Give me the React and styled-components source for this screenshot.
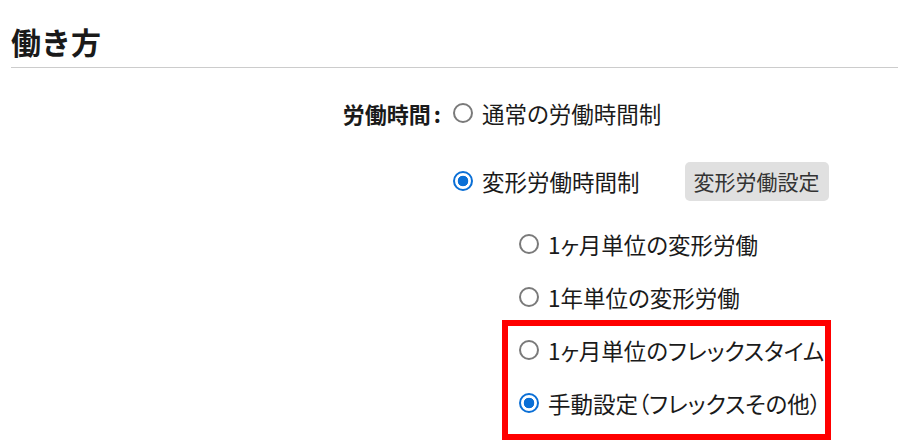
import React from 'react';
import styled, { createGlobalStyle } from 'styled-components';

const GlobalStyle = createGlobalStyle`
  html, body {
    margin: 0;
    padding: 0;
    background: #ffffff;
  }

  body {
    font-family: 'Noto Sans CJK JP', 'Noto Sans', sans-serif;
    color: #1a1a1a;
  }
`;

const StyledPage = styled.div`
  padding: 23px 0 0 11px;
`;

const StyledTitle = styled.h1`
  margin: 0;
  padding-bottom: 8px;
  border-bottom: 1px solid #cccccc;
  font-size: 30px;
  font-weight: 700;
  line-height: 36px;
  color: #1a1a1a;
`;

const StyledField = styled.div`
  display: flex;
  align-items: flex-start;
  gap: 12px;
  margin-top: 25px;
`;

const StyledLabel = styled.div`
  width: 430px;
  height: 40px;
  display: flex;
  align-items: center;
  justify-content: flex-end;
  font-size: 22px;
  font-weight: 700;
  font-feature-settings: 'palt';

  span {
    margin-left: 3px;
  }
`;

const StyledOptions = styled.div`
  display: flex;
  flex-direction: column;
  gap: 28px;
`;

const StyledOption = styled.label`
  display: flex;
  align-items: center;
  gap: 9px;
  height: ${(p) => (p.$sub ? '30px' : '40px')};
  font-size: 22.5px;
  font-feature-settings: 'palt';
  white-space: nowrap;
  cursor: pointer;
`;

const StyledRadio = styled.input.attrs({ type: 'radio' })`
  appearance: none;
  flex: none;
  box-sizing: border-box;
  width: 20px;
  height: 20px;
  margin: 0;
  border-radius: 50%;
  border: 2px solid #7a7a7a;
  background: #ffffff;

  &:checked {
    border: 2px solid #0a6fd6;
    background: radial-gradient(circle, #0a6fd6 0 5px, #ffffff 5.6px);
  }
`;

const StyledButton = styled.button`
  height: 39px;
  margin-left: 36px;
  padding: 0 9px;
  border: none;
  border-radius: 5px;
  background-color: #e0e0e0;
  font-family: inherit;
  font-size: 21px;
  font-feature-settings: 'palt';
  color: #333333;
`;

const StyledSubList = styled.div`
  display: flex;
  flex-direction: column;
  gap: 23px;
  margin: 28px 0 0 66px;
`;

const StyledHighlight = styled.div`
  display: flex;
  flex-direction: column;
  gap: 23px;
  width: 306px;
  margin: -15px 0 0 -17px;
  padding: 9px 0 16px 11px;
  border: 6px solid #ff0000;
`;

const subOptions = [
  { id: 'month', label: '1ヶ月単位の変形労働' },
  { id: 'year', label: '1年単位の変形労働' },
];

const flexOptions = [
  { id: 'flex', label: '1ヶ月単位のフレックスタイム' },
  { id: 'manual', label: '手動設定（フレックスその他）' },
];

const App = () => {
  const [mode, setMode] = React.useState('variable');
  const [sub, setSub] = React.useState('manual');

  const renderSub = (item) => (
    <StyledOption $sub key={item.id}>
      <StyledRadio
        name='sub'
        checked={sub === item.id}
        onChange={() => setSub(item.id)}
      />
      {item.label}
    </StyledOption>
  );

  return (
    <StyledPage>
      <GlobalStyle />
      <StyledTitle>働き方</StyledTitle>
      <StyledField>
        <StyledLabel>
          労働時間<span>:</span>
        </StyledLabel>
        <StyledOptions>
          <StyledOption>
            <StyledRadio
              name='mode'
              checked={mode === 'normal'}
              onChange={() => setMode('normal')}
            />
            通常の労働時間制
          </StyledOption>
          <div>
            <StyledOption>
              <StyledRadio
                name='mode'
                checked={mode === 'variable'}
                onChange={() => setMode('variable')}
              />
              変形労働時間制
              <StyledButton type='button'>変形労働設定</StyledButton>
            </StyledOption>
            <StyledSubList>
              {subOptions.map(renderSub)}
              <StyledHighlight>{flexOptions.map(renderSub)}</StyledHighlight>
            </StyledSubList>
          </div>
        </StyledOptions>
      </StyledField>
    </StyledPage>
  );
};

export default App;
